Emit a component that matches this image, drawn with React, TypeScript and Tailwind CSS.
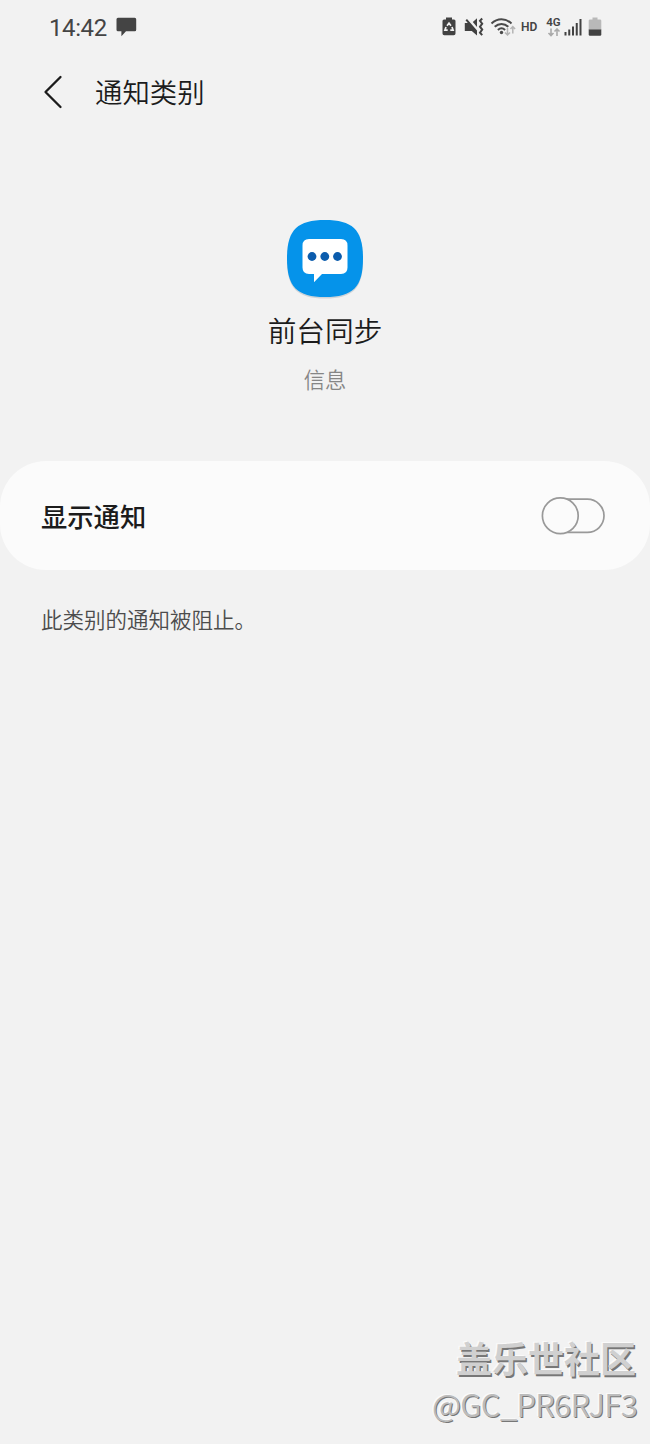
import { useState } from 'react';

function StatusBar() {
	return (
		<div className="flex h-[54px] items-center justify-between pr-[47px] pl-[49px] text-[#444444]">
			<div className="flex items-center pt-px">
				<span className="w-[58px] whitespace-nowrap font-[Roboto,sans-serif] text-[24px] leading-none tracking-[-0.4px]">
					14:42
				</span>
				<svg className="mb-px ml-[9px]" width="21" height="20" viewBox="0 0 21 20" fill="currentColor">
					<path d="M2 .7h16.700a1.500 1.500 0 0 1 1.500 1.500v10.600a1.500 1.500 0 0 1-1.500 1.500H10l-4.600 4.900v-4.900H2a1.500 1.500 0 0 1-1.500-1.500V2.200A1.500 1.500 0 0 1 2 .7Z" />
				</svg>
			</div>
			<StatusIcons />
		</div>
	);
}

function StatusIcons() {
	return (
		<div className="flex items-center">
			{/* Battery saver */}
			<svg width="14" height="20" viewBox="0 0 14 20">
				<path
					d="M4 .5h6v2h2A1.500 1.500 0 0 1 13.500 4v12.500a1.800 1.800 0 0 1-1.800 1.800H2.300a1.800 1.800 0 0 1-1.800-1.800V4A1.500 1.500 0 0 1 2 2.500h2Z"
					fill="#424242"
				/>
				<path
					d="M5 8.700 7 6.200l2 2.500M10 10l1.100 3.200H8.300M5.700 13.200H2.900L4 10"
					fill="none"
					stroke="#f2f2f2"
					strokeWidth="1.700"
				/>
			</svg>
			{/* Vibrate / muted */}
			<svg className="ml-[8px]" width="20" height="22" viewBox="0 0 20 22">
				<path d="M.8 7h3L1.500 4.300 3 3l10 11.500v5L7.800 15H.8Z" fill="#424242" />
				<path d="M8.800 6 13 2.200v8.800Z" fill="#424242" />
				<path
					d="m18.200 2.500-2.200 2.400 2.200 2.800-2.200 3 2.200 2.900-2.200 3 2.200 2.600"
					fill="none"
					stroke="#424242"
					strokeWidth="2"
				/>
			</svg>
			{/* Wi-Fi with traffic arrows */}
			<svg className="ml-[6px]" width="26" height="20" viewBox="0 0 26 20">
				<g fill="none" stroke="#4a4a4a" strokeWidth="2">
					<path d="M1.500 6.500C7.300.8 15.700.8 21.500 6.500" />
					<path d="M4.700 9.800c4-3.900 9.600-3.900 13.600 0" />
					<path d="M7.900 13c2.200-2.100 5-2.100 7.200 0" />
				</g>
				<circle cx="11.500" cy="15.500" r="1.700" fill="#4a4a4a" />
				<path
					d="M17.500 11v7M15 15.500l2.500 2.500 2.500-2.500M22.800 16.500v-7M20.500 12l2.300-2.500 2.300 2.500"
					fill="none"
					stroke="#b4b4b4"
					strokeWidth="1.500"
				/>
			</svg>
			<span className="ml-[5px] w-[17px] whitespace-nowrap font-[Roboto,sans-serif] font-semibold text-[12px] leading-none">
				HD
			</span>
			<div className="ml-[8px] flex w-[15px] flex-col items-center">
				<span className="font-[Roboto,sans-serif] font-semibold text-[11.500px] leading-[11px]">4G</span>
				<svg width="14" height="9" viewBox="0 0 14 9">
					<path
						d="M4 .5v7M1.500 5 4 7.500 6.500 5M10 8V1M7.500 3.500 10 1l2.500 2.500"
						fill="none"
						stroke="#a9a9a9"
						strokeWidth="1.600"
					/>
				</svg>
			</div>
			<svg className="ml-[3px]" width="18" height="18" viewBox="0 0 18 18">
				<path
					d="M1.500 14v3.500M5.250 11.500v6M9 8.500v9M12.750 5v12.500M16.500 1v16.500"
					fill="none"
					stroke="#424242"
					strokeWidth="2"
				/>
			</svg>
			<svg className="mr-px ml-[6px]" width="14" height="20" viewBox="0 0 14 20">
				<path d="M4.500.5h5v2h2.500a1.300 1.300 0 0 1 1.300 1.300V13H.7V3.800A1.300 1.300 0 0 1 2 2.500h2.500Z" fill="#b9b9b9" />
				<path d="M.7 12.500h12.600v5a1.300 1.300 0 0 1-1.300 1.300H2A1.300 1.300 0 0 1 .7 17.500Z" fill="#424242" />
			</svg>
		</div>
	);
}

function MessagesIcon() {
	return (
		<svg className="-ml-px" width="80" height="82" viewBox="0 0 80 82">
			<path
				d="M40 2.500C68 2.500 78 12.500 78 41S68 79.500 40 79.500 2 69.500 2 41 12 2.500 40 2.500Z"
				fill="#cfd4d8"
			/>
			<path
				d="M40 1C68 1 78 11 78 39.500S68 78 40 78 2 68 2 39.500 12 1 40 1Z"
				fill="#0593ea"
			/>
			<path
				d="M24 20h32q6.500 0 6.500 6.500v22q0 6.500-6.500 6.500H37l-8 8.200V55h-5q-6.500 0-6.500-6.500v-22Q17.500 20 24 20Z"
				fill="#fff"
			/>
			<g fill="#0b5cad">
				<circle cx="27" cy="37.500" r="4.400" />
				<circle cx="39.800" cy="37.500" r="4.400" />
				<circle cx="52.500" cy="37.500" r="4.400" />
			</g>
		</svg>
	);
}

export default function App() {
	const [enabled, setEnabled] = useState(false);

	return (
		<div className="flex h-[1444px] w-[650px] flex-col overflow-hidden bg-[#f2f2f2] font-['Noto_Sans_CJK_SC',sans-serif] text-[#1c1c1c]">
			<StatusBar />

			<header className="flex h-[75px] items-center pl-[43px]">
				<svg width="20" height="34" viewBox="0 0 20 34">
					<path
						d="M17.500 2 2.500 17l15 15"
						fill="none"
						stroke="#1c1c1c"
						strokeWidth="2.300"
						strokeLinecap="round"
						strokeLinejoin="round"
					/>
				</svg>
				<h1 className="ml-[32px] pb-px font-[350] text-[27.400px] leading-[40px]">通知类别</h1>
			</header>

			<section className="flex h-[332px] flex-col items-center pt-[90px]">
				<MessagesIcon />
				<h2 className="mt-[8px] font-[350] text-[28.700px] leading-[42px]">前台同步</h2>
				<p className="mt-[12px] font-[350] text-[#868686] text-[21.300px] leading-[32px]">信息</p>
			</section>

			<section className="flex h-[109px] items-center justify-between rounded-[46px] bg-[#fbfbfb] pr-[45px] pl-[41px]">
				<span className="font-medium text-[26.300px] leading-[40px]">显示通知</span>
				<button
					type="button"
					role="switch"
					aria-checked={enabled}
					aria-label="显示通知"
					onClick={() => setEnabled(!enabled)}
				>
					<svg width="64" height="38" viewBox="0 0 64 38">
						<g fill="#fbfbfb" stroke="#999" strokeWidth="1.700">
							<rect x="3" y="2.200" width="60" height="33.200" rx="16.600" />
							<circle cx={enabled ? 44.500 : 19.300} cy="18.800" r="17.900" />
						</g>
					</svg>
				</button>
			</section>

			<p className="mt-[33px] pl-[41px] font-[350] text-[#4c4c4c] text-[21.500px] leading-[32px]">
				此类别的通知被阻止。
			</p>

			<footer className="mt-auto flex flex-col items-end pr-[14px] pb-[17px]">
				<span className="font-bold text-[#d0d0d0] text-[36px] leading-[48px] [text-shadow:1.500px_1.500px_0_#777,-1.500px_-1.500px_0_#fafafa]">
					盖乐世社区
				</span>
				<span className="mr-[-1px] font-[350] text-[#bcbcbc] text-[31px] leading-[46px] tracking-[-0.65px] [text-shadow:1px_1px_0_#777,-1.500px_-1.500px_0_#fafafa]">
					@GC_PR6RJF3
				</span>
			</footer>
		</div>
	);
}
